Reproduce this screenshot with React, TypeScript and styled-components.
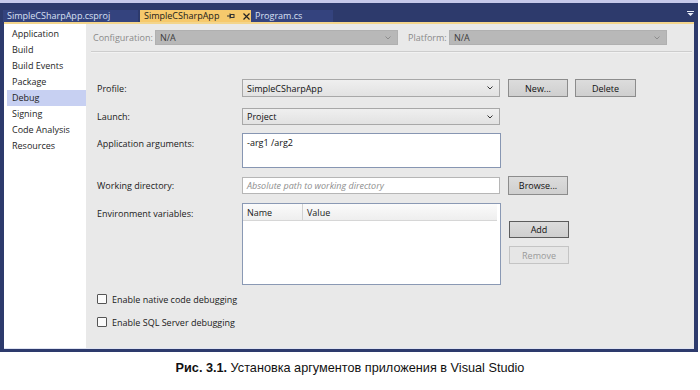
import React from "react";
import styled, { createGlobalStyle } from "styled-components";

const Global = createGlobalStyle`
  html, body { margin: 0; padding: 0; background: #ffffff; }
  body { font-family: "Open Sans", "Noto Sans", sans-serif; }
  * { box-sizing: border-box; }
`;

const Page = styled.div`
  width: 700px;
  height: 390px;
  background: #fff;
`;

const Frame = styled.div`
  width: 698px;
  background: #2d3a6c;
  border-top: 3px solid #c6c9ea;
  padding: 0 4px 3px 4px;
  display: flex;
  flex-direction: column;
`;

const TabBar = styled.div`
  height: 19px;
  display: flex;
  align-items: flex-end;
  margin-left: -1px;
`;

const Tab = styled.div<{ $active?: boolean; $w: number }>`
  width: ${(p) => p.$w}px;
  height: 12px;
  display: flex;
  align-items: center;
  gap: 6px;
  padding: 0 4px;
  font-size: 9px;
  line-height: 12px;
  white-space: nowrap;
  background: ${(p) => (p.$active ? "#f6c96c" : "#34437e")};
  color: ${(p) => (p.$active ? "#1a1a1a" : "#d9e0f4")};
`;

const TabIcons = styled.span`
  display: flex;
  align-items: center;
  gap: 8px;
  margin-left: 2px;
`;

const BarMenu = styled.div`
  margin-left: auto;
  align-self: center;
  display: flex;
  margin-top: 2px;
`;

const TabLine = styled.div`
  height: 2px;
  background: #f3d58c;
`;

const Body = styled.div`
  height: 325px;
  display: flex;
  border-bottom: 1px solid #dfe3f2;
`;

const Sidebar = styled.div`
  width: 82px;
  background: #ffffff;
  padding-top: 2px;
  display: flex;
  flex-direction: column;
`;

const NavItem = styled.div<{ $selected?: boolean }>`
  height: 16px;
  line-height: 16px;
  margin-left: 3px;
  padding-left: 5px;
  font-size: 9px;
  color: #1e1e1e;
  background: ${(p) => (p.$selected ? "#c7d0f2" : "transparent")};
`;

const Main = styled.div`
  flex: 1;
  background: #e9e9e9;
  display: flex;
  flex-direction: column;
`;

const ConfigRow = styled.div`
  margin-top: 6px;
  height: 15px;
  padding-left: 7px;
  display: flex;
  align-items: center;
`;

const ConfigLabel = styled.div<{ $w: number }>`
  width: ${(p) => p.$w}px;
  font-size: 9px;
  color: #8a8a8a;
  white-space: nowrap;
`;

const DisabledSelect = styled.div<{ $w: number }>`
  width: ${(p) => p.$w}px;
  height: 15px;
  background: #b8b8b8;
  border: 1px solid #b0b0b0;
  display: flex;
  align-items: center;
  justify-content: space-between;
  padding: 0 6px 0 4px;
  font-size: 9px;
  color: #3a3a3a;
`;

const Separator = styled.div`
  margin: 6px 2px 0 5px;
  height: 2px;
  background: #cdcdcd;
  border-bottom: 1px solid #f2f2f2;
`;

const Form = styled.div`
  padding-left: 11px;
  display: flex;
  flex-direction: column;
`;

const Row = styled.div<{ $top: number; $h: number; $align?: string }>`
  margin-top: ${(p) => p.$top}px;
  height: ${(p) => p.$h}px;
  display: flex;
  align-items: ${(p) => p.$align || "center"};
`;

const Label = styled.div<{ $pt?: number }>`
  width: 145px;
  font-size: 9px;
  color: #1a1a1a;
  padding-top: ${(p) => p.$pt || 0}px;
  white-space: nowrap;
`;

const Select = styled.div<{ $h: number }>`
  width: 258px;
  height: ${(p) => p.$h}px;
  background: linear-gradient(#efefef, #e2e2e2);
  border: 1px solid #a8a8a8;
  display: flex;
  align-items: center;
  justify-content: space-between;
  padding: 0 6px 0 4px;
  font-size: 9px;
  color: #111;
`;

const TextArea = styled.div`
  width: 259px;
  height: 35px;
  background: #fff;
  border: 1px solid #8796b2;
  padding: 3px 4px;
  font-size: 9px;
  line-height: 11px;
  color: #111;
`;

const Input = styled.div`
  width: 258px;
  height: 17px;
  background: #fff;
  border: 1px solid #b6b6b6;
  display: flex;
  align-items: center;
  padding: 0 4px;
  font-size: 9px;
  font-style: italic;
  color: #8e8e8e;
`;

const Button = styled.div<{ $w?: number; $h?: number; $disabled?: boolean; $strong?: boolean }>`
  width: ${(p) => p.$w || 60}px;
  height: ${(p) => p.$h || 18}px;
  display: flex;
  align-items: center;
  justify-content: center;
  font-size: 9px;
  color: ${(p) => (p.$disabled ? "#9a9a9a" : "#111")};
  background: ${(p) => (p.$disabled ? "#e6e6e6" : "linear-gradient(#dcdcdc, #cfcfcf)")};
  border: 1px solid ${(p) => (p.$disabled ? "#c4c4c4" : p.$strong ? "#5c5c5c" : "#8c8c8c")};
`;

const Buttons = styled.div`
  display: flex;
  gap: 7px;
  margin-left: 8px;
`;

const Table = styled.div`
  width: 259px;
  height: 82px;
  background: #fff;
  border: 1px solid #8a99b4;
  padding-right: 3px;
`;

const TableHead = styled.div`
  height: 17px;
  display: flex;
  background: linear-gradient(#fbfbfb, #eeeeee);
  border-bottom: 1px solid #d6d6d6;
`;

const HeadCell = styled.div<{ $w?: number }>`
  width: ${(p) => (p.$w ? `${p.$w}px` : "auto")};
  flex: ${(p) => (p.$w ? "none" : "1")};
  padding-left: 4px;
  display: flex;
  align-items: center;
  font-size: 9px;
  color: #1a1a1a;
  border-right: ${(p) => (p.$w ? "1px solid #d2d2d2" : "none")};
`;

const EnvButtons = styled.div`
  display: flex;
  flex-direction: column;
  margin-left: 8px;
  padding-top: 18px;
  gap: 8px;
`;

const CheckRow = styled.div<{ $top: number }>`
  margin-top: ${(p) => p.$top}px;
  height: 12px;
  display: flex;
  align-items: center;
  gap: 5px;
  font-size: 9px;
  color: #1a1a1a;
`;

const Box = styled.span`
  width: 10px;
  height: 10px;
  background: #fbfbfb;
  border: 1px solid #555;
  border-radius: 1px;
`;

const Caption = styled.div`
  margin-top: 9px;
  text-align: center;
  font-family: "Liberation Sans", Arial, sans-serif;
  font-size: 12.7px;
  line-height: 15px;
  color: #111;
  b { font-weight: bold; }
`;

const Chevron = ({ color = "#333" }: { color?: string }) => (
  <svg width="6" height="4" viewBox="0 0 6 4">
    <path d="M0.5 0.5 L3 3 L5.5 0.5" fill="none" stroke={color} strokeWidth="1" />
  </svg>
);

const Pin = () => (
  <svg width="8" height="6" viewBox="0 0 8 6">
    <path d="M0 3 H3 M3 0.5 V5.5" stroke="#333" strokeWidth="1" fill="none" />
    <rect x="3.5" y="1.5" width="3.5" height="3" fill="none" stroke="#333" strokeWidth="1" />
  </svg>
);

const Close = () => (
  <svg width="7" height="7" viewBox="0 0 7 7">
    <path d="M0.5 0.5 L6.5 6.5 M6.5 0.5 L0.5 6.5" stroke="#222" strokeWidth="1.2" />
  </svg>
);

const MenuArrow = () => (
  <svg width="7" height="5" viewBox="0 0 7 5">
    <rect x="0" y="0" width="7" height="1" fill="#e8ecf8" />
    <path d="M0.5 2 H6.5 L3.5 5 Z" fill="#e8ecf8" />
  </svg>
);

const navItems = [
  "Application",
  "Build",
  "Build Events",
  "Package",
  "Debug",
  "Signing",
  "Code Analysis",
  "Resources",
];

export default function App() {
  return (
    <Page>
      <Global />
      <Frame>
        <TabBar>
          <Tab $w={135}>SimpleCSharpApp.csproj</Tab>
          <Tab $w={111} $active style={{ marginLeft: 2 }}>
            SimpleCSharpApp
            <TabIcons>
              <Pin />
              <Close />
            </TabIcons>
          </Tab>
          <Tab $w={82}>Program.cs</Tab>
          <BarMenu>
            <MenuArrow />
          </BarMenu>
        </TabBar>
        <TabLine />
        <Body>
          <Sidebar>
            {navItems.map((n) => (
              <NavItem key={n} $selected={n === "Debug"}>
                {n}
              </NavItem>
            ))}
          </Sidebar>
          <Main>
            <ConfigRow>
              <ConfigLabel $w={62}>Configuration:</ConfigLabel>
              <DisabledSelect $w={243}>
                N/A
                <Chevron color="#8c8c8c" />
              </DisabledSelect>
              <ConfigLabel $w={41} style={{ marginLeft: 10 }}>
                Platform:
              </ConfigLabel>
              <DisabledSelect $w={218}>
                N/A
                <Chevron color="#8c8c8c" />
              </DisabledSelect>
            </ConfigRow>
            <Separator />
            <Form>
              <Row $top={26} $h={18}>
                <Label>Profile:</Label>
                <Select $h={18}>
                  SimpleCSharpApp
                  <Chevron />
                </Select>
                <Buttons>
                  <Button $w={60}>New...</Button>
                  <Button $w={61}>Delete</Button>
                </Buttons>
              </Row>
              <Row $top={11} $h={17}>
                <Label>Launch:</Label>
                <Select $h={17}>
                  Project
                  <Chevron />
                </Select>
              </Row>
              <Row $top={8} $h={35} $align="flex-start">
                <Label $pt={4}>Application arguments:</Label>
                <TextArea>-arg1 /arg2</TextArea>
              </Row>
              <Row $top={8} $h={19}>
                <Label>Working directory:</Label>
                <Input>Absolute path to working directory</Input>
                <Buttons>
                  <Button $w={60} $h={19}>
                    Browse...
                  </Button>
                </Buttons>
              </Row>
              <Row $top={8} $h={82} $align="flex-start">
                <Label $pt={4}>Environment variables:</Label>
                <Table>
                  <TableHead>
                    <HeadCell $w={60}>Name</HeadCell>
                    <HeadCell>Value</HeadCell>
                  </TableHead>
                </Table>
                <EnvButtons>
                  <Button $w={60} $h={17} $strong>
                    Add
                  </Button>
                  <Button $w={60} $h={18} $disabled>
                    Remove
                  </Button>
                </EnvButtons>
              </Row>
              <CheckRow $top={8}>
                <Box />
                Enable native code debugging
              </CheckRow>
              <CheckRow $top={11}>
                <Box />
                Enable SQL Server debugging
              </CheckRow>
            </Form>
          </Main>
        </Body>
      </Frame>
      <Caption>
        <b>Рис. 3.1.</b> Установка аргументов приложения в Visual Studio
      </Caption>
    </Page>
  );
}
